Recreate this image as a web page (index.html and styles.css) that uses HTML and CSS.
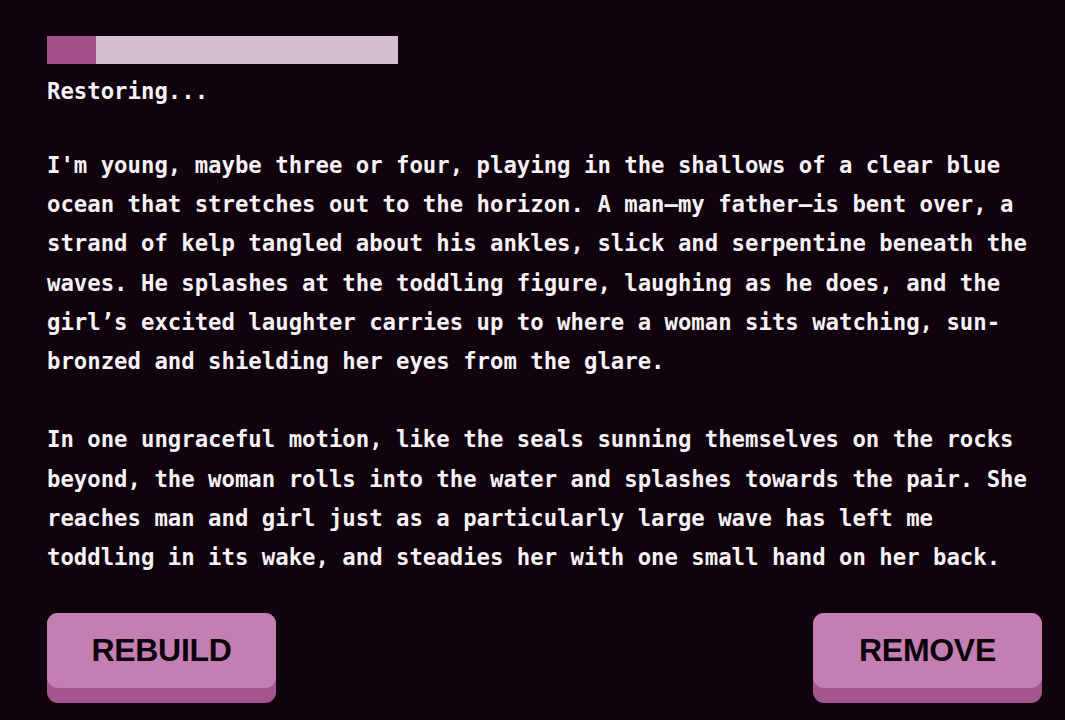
FILE: index.html
```html
<!DOCTYPE html>
<html lang="en">
<head>
<meta charset="utf-8">
<title>Restoring</title>
<link rel="stylesheet" href="styles.css">
</head>
<body>
<main class="screen">
  <div class="progress"><div class="progress-fill" style="width:14%"></div></div>
  <div class="status">Restoring...</div>
  <p class="memory first">I'm young, maybe three or four, playing in the shallows of a clear blue ocean that stretches out to the horizon. A man—my father—is bent over, a strand of kelp tangled about his ankles, slick and serpentine beneath the waves. He splashes at the toddling figure, laughing as he does, and the girl’s excited laughter carries up to where a woman sits watching, sun-bronzed and shielding her eyes from the glare.</p>
  <p class="memory">In one ungraceful motion, like the seals sunning themselves on the rocks beyond, the woman rolls into the water and splashes towards the pair. She reaches man and girl just as a particularly large wave has left me toddling in its wake, and steadies her with one small hand on her back.</p>
  <div class="actions">
    <button class="btn"><span class="btn-face">REBUILD</span></button>
    <button class="btn"><span class="btn-face">REMOVE</span></button>
  </div>
</main>
</body>
</html>
```

FILE: styles.css
```css
html, body {
  margin: 0;
  padding: 0;
  background: #10030e;
}

.screen {
  padding: 36px 23px 0 47px;
  color: #f6f2f5;
  font-family: "DejaVu Sans Mono", "Liberation Mono", monospace;
  font-size: 22.3px;
  font-weight: bold;
  line-height: 39.2px;
}

.progress {
  width: 351px;
  height: 28px;
  background: #d5c0d1;
  display: flex;
}

.progress-fill {
  height: 100%;
  background: #a4508b;
}

.status {
  margin-top: 8px;
}

.memory {
  margin: 39.2px 0 0 0;
  max-width: 988px;
}

.memory.first {
  margin-top: 34.8px;
}

.actions {
  margin-top: 35.4px;
  display: flex;
  justify-content: space-between;
  align-items: flex-start;
}

.btn {
  display: flex;
  align-items: flex-start;
  width: 229px;
  height: 90px;
  border: none;
  border-radius: 11px;
  background: #a5548f;
  padding: 0;
  margin: 0;
  cursor: pointer;
}

.btn-face {
  display: flex;
  align-items: center;
  justify-content: center;
  width: 100%;
  height: 75px;
  border-radius: 11px;
  background: #c47fb2;
  color: #0d020b;
  font-family: "Liberation Sans", Arial, sans-serif;
  font-weight: bold;
  font-size: 32px;
  letter-spacing: -0.3px;
}
```
